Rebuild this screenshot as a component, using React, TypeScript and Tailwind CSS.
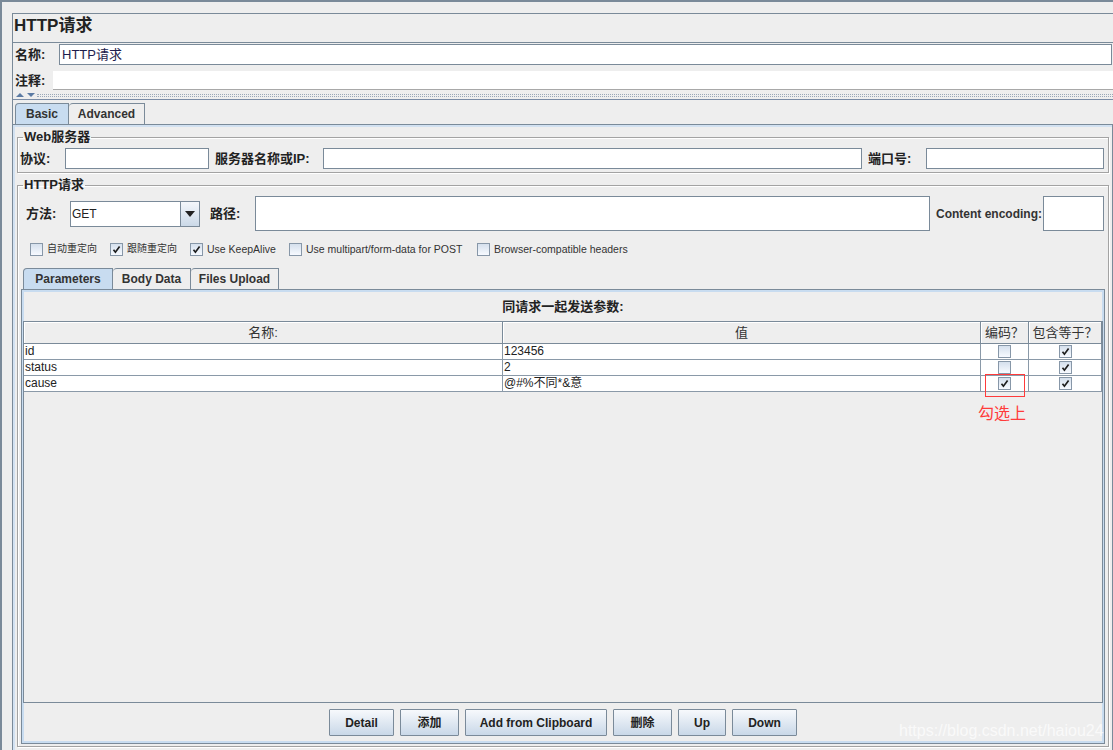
import React from 'react';

type Row = { name: string; value: string; encode: boolean; eq: boolean };

const rows: Row[] = [
  { name: 'id', value: '123456', encode: false, eq: true },
  { name: 'status', value: '2', encode: false, eq: true },
  { name: 'cause', value: '@#%不同*&意', encode: true, eq: true },
];

function CheckBox({ checked }: { checked?: boolean }) {
  return (
    <span className="inline-flex w-[13px] h-[13px] shrink-0 items-center justify-center border border-[#8797a8] bg-linear-to-b from-[#d5e0ed] to-[#f7faff]">
      {checked && (
        <svg width="9" height="9" viewBox="0 0 9 9">
          <path d="M1.5 4.8 L3.4 7.2 L7.6 1.6" fill="none" stroke="#1e1e1e" strokeWidth="1.7" />
        </svg>
      )}
    </span>
  );
}

function Option({ label, checked, className, textClass }: { label: string; checked?: boolean; className: string; textClass: string }) {
  return (
    <div className={className}>
      <CheckBox checked={checked} />
      <span className={`ml-[4px] leading-[14px] text-[#333] ${textClass}`}>{label}</span>
    </div>
  );
}

export default function App() {
  return (
    <div className="relative w-[1113px] h-[750px] overflow-hidden bg-[#eeeeee] border-l-2 border-t-2 border-[#7a8a99] text-[#222] font-['Liberation_Sans','Noto_Sans_CJK_SC',sans-serif]">
      <div className="ml-[10px] mt-[11px] w-[1105px] border-l border-t border-[#7a8a99]">
        {/* title */}
        <div className="h-[28px] pt-[2px] text-[17px] font-bold leading-[20px] pl-px">HTTP请求</div>

        {/* name / comment */}
        <div className="border-t border-[#7a8a99]">
          <div className="flex items-center mt-px h-[21px]">
            <div className="w-[46px] pl-[2px] text-[13px] font-bold">名称:</div>
            <div className="w-[1053px] h-[21px] bg-white border border-[#7a8a99] pl-[2px] text-[13px] leading-[19px] text-[#1d1d4d]">
              HTTP请求
            </div>
          </div>
          <div className="flex items-center mt-[6px] h-[19px]">
            <div className="w-[40px] pl-[2px] text-[13px] font-bold">注释:</div>
            <div className="flex-1 h-[19px] bg-white border-b border-[#a8a8a8]" />
          </div>
        </div>

        {/* splitter */}
        <div className="flex items-center h-[10px] border-b border-[#7a8ca6]">
          <svg width="22" height="6" viewBox="0 0 22 6" className="ml-[2px] shrink-0">
            <path d="M1 5 L5 1 L9 5 Z" fill="#5b7aa3" />
            <path d="M12 1 L20 1 L16 5 Z" fill="#5b7aa3" />
          </svg>
          <div className="flex-1 h-[3px] mt-[2px] border-t border-b border-dotted border-[#9aa8b8]" />
        </div>

        {/* Basic / Advanced tabs */}
        <div className="flex items-end pl-[2px] mt-[3px] h-[21px]">
          <div className="w-[54px] h-[21px] flex items-center justify-center border-t border-l border-r border-[#7a8a99] bg-[#c8dcf0] rounded-tl-[4px] text-[12px] font-bold text-[#333]">Basic</div>
          <div className="w-[76px] h-[21px] flex items-center justify-center border-t border-r border-[#7a8a99] rounded-tl-[4px] text-[12px] font-bold text-[#333]">Advanced</div>
        </div>

        {/* Basic panel */}
        <div className="w-[1100px] h-[640px] border-t border-r border-[#7a8a99] shadow-[inset_2px_2px_0_#d2e1f1]">
          {/* Web server */}
          <fieldset className="ml-[4px] mt-[4px] w-[1092px] border border-[#a3a3a3] shadow-[inset_1px_1px_0_#fff,1px_1px_0_#fff]">
            <legend className="ml-[5px] px-px text-[13px] font-bold leading-[16px]">Web服务器</legend>
            <div className="flex items-center pt-[3px] pb-[3px] pl-[2px]">
              <div className="w-[45px] text-[13px] font-bold">协议:</div>
              <div className="w-[144px] h-[21px] bg-white border border-[#7a8a99]" />
              <div className="ml-[6px] w-[108px] text-[13px] font-bold">服务器名称或IP:</div>
              <div className="w-[539px] h-[21px] bg-white border border-[#7a8a99]" />
              <div className="ml-[6px] w-[58px] text-[13px] font-bold">端口号:</div>
              <div className="w-[178px] h-[21px] bg-white border border-[#7a8a99]" />
            </div>
          </fieldset>

          {/* HTTP request */}
          <fieldset className="ml-[4px] mt-[4px] w-[1092px] pb-[2px] border border-[#a3a3a3] shadow-[inset_1px_1px_0_#fff,1px_1px_0_#fff]">
            <legend className="ml-[5px] px-px text-[13px] font-bold leading-[16px]">HTTP请求</legend>

            <div className="flex items-center mt-[3px] pl-[8px]">
              <div className="w-[44px] text-[13px] font-bold">方法:</div>
              <div className="flex w-[130px] h-[26px] bg-white border border-[#7a8a99]">
                <div className="flex-1 pl-[1px] text-[12px] leading-[24px]">GET</div>
                <div className="w-[19px] flex items-center justify-center border-l border-[#7a8a99] bg-linear-to-b from-[#f4f7fb] to-[#cbd9e8]">
                  <svg width="10" height="6" viewBox="0 0 10 6">
                    <path d="M0 0 L10 0 L5 6 Z" fill="#222" />
                  </svg>
                </div>
              </div>
              <div className="ml-[10px] w-[45px] text-[13px] font-bold">路径:</div>
              <div className="w-[675px] h-[35px] bg-white border border-[#7a8a99]" />
              <div className="ml-[6px] w-[107px] text-[12px] font-bold text-[#333]">Content encoding:</div>
              <div className="w-[61px] h-[35px] bg-white border border-[#7a8a99]" />
            </div>

            <div className="flex items-center mt-[11px] h-[14px] pl-[12px]">
              <Option className="flex items-center w-[80px]" textClass="text-[10px]" label="自动重定向" />
              <Option className="flex items-center w-[80px]" textClass="text-[10px]" label="跟随重定向" checked />
              <Option className="flex items-center w-[99px]" textClass="text-[10.5px]" label="Use KeepAlive" checked />
              <Option className="flex items-center w-[188px]" textClass="text-[10.5px]" label="Use multipart/form-data for POST" />
              <Option className="flex items-center" textClass="text-[10.5px]" label="Browser-compatible headers" />
            </div>

            {/* inner tabs */}
            <div className="flex items-end mt-[12px] ml-[5px] h-[21px]">
              <div className="w-[90px] h-[21px] flex items-center justify-center border-t border-l border-r border-[#7a8a99] bg-[#c8dcf0] rounded-tl-[4px] text-[12px] font-bold text-[#333]">Parameters</div>
              <div className="w-[78px] h-[21px] flex items-center justify-center border-t border-r border-[#7a8a99] rounded-tl-[4px] text-[12px] font-bold text-[#333]">Body Data</div>
              <div className="w-[88px] h-[21px] flex items-center justify-center border-t border-r border-[#7a8a99] rounded-tl-[4px] text-[12px] font-bold text-[#333]">Files Upload</div>
            </div>

            {/* parameters panel */}
            <div className="ml-[3px] w-[1084px] h-[455px] border border-[#7a8a99] shadow-[inset_2px_2px_0_#c8dcf0,inset_-2px_-2px_0_#c8dcf0]">
              <div className="h-[31px] pt-[3px] flex items-center justify-center text-[13px] font-bold">同请求一起发送参数:</div>

              <div className="ml-px w-[1080px] h-[382px] border border-[#7a8a99] bg-[#eeeeee]">
                <div className="grid grid-cols-[479px_478px_48px_73px]">
                  {['名称:', '值', '编码？', '包含等于？'].map((h) => (
                    <div
                      key={h}
                      className="h-[22px] flex items-center justify-center border-r border-b border-[#7a8a99] bg-[#eeeeee] shadow-[inset_0_1px_0_#fff,inset_1px_0_0_#fff] text-[13px] text-[#333]"
                    >
                      {h}
                    </div>
                  ))}
                  {rows.map((r) => (
                    <React.Fragment key={r.name}>
                      <div className="h-[16px] pl-px bg-white border-r border-b border-[#8a99a8] text-[12px] leading-[15px] text-[#222]">{r.name}</div>
                      <div className="h-[16px] pl-px bg-white border-r border-b border-[#8a99a8] text-[12px] leading-[15px] text-[#222]">{r.value}</div>
                      <div className="h-[16px] flex items-center justify-center bg-white border-r border-b border-[#8a99a8]">
                        <CheckBox checked={r.encode} />
                      </div>
                      <div className="h-[16px] flex items-center justify-center bg-white border-r border-b border-[#8a99a8]">
                        <CheckBox checked={r.eq} />
                      </div>
                    </React.Fragment>
                  ))}
                </div>
              </div>

              <div className="flex justify-center gap-[6px] mt-[6px]">
                {[
                  { label: 'Detail', w: 'w-[65px]' },
                  { label: '添加', w: 'w-[59px]' },
                  { label: 'Add from Clipboard', w: 'w-[142px]' },
                  { label: '删除', w: 'w-[59px]' },
                  { label: 'Up', w: 'w-[48px]' },
                  { label: 'Down', w: 'w-[65px]' },
                ].map((b) => (
                  <div
                    key={b.label}
                    className={`${b.w} h-[27px] flex items-center justify-center border border-[#7a8a99] rounded-[1px] bg-linear-to-b from-[#f7f9fc] to-[#c9d8e8] text-[12px] font-bold text-[#222]`}
                  >
                    {b.label}
                  </div>
                ))}
              </div>
            </div>
          </fieldset>
        </div>
      </div>

      {/* annotation overlays */}
      <div className="absolute left-[983px] top-[372px] w-[40px] h-[23px] border border-[#ff3b3b]" />
      <div className="absolute left-[976px] top-[402px] text-[16px] leading-[20px] text-[#ff3b3b]">勾选上</div>
      <div className="absolute left-[897px] top-[719px] text-[16px] leading-[20px] text-white/70">https://blog.csdn.net/haiou24</div>
    </div>
  );
}
